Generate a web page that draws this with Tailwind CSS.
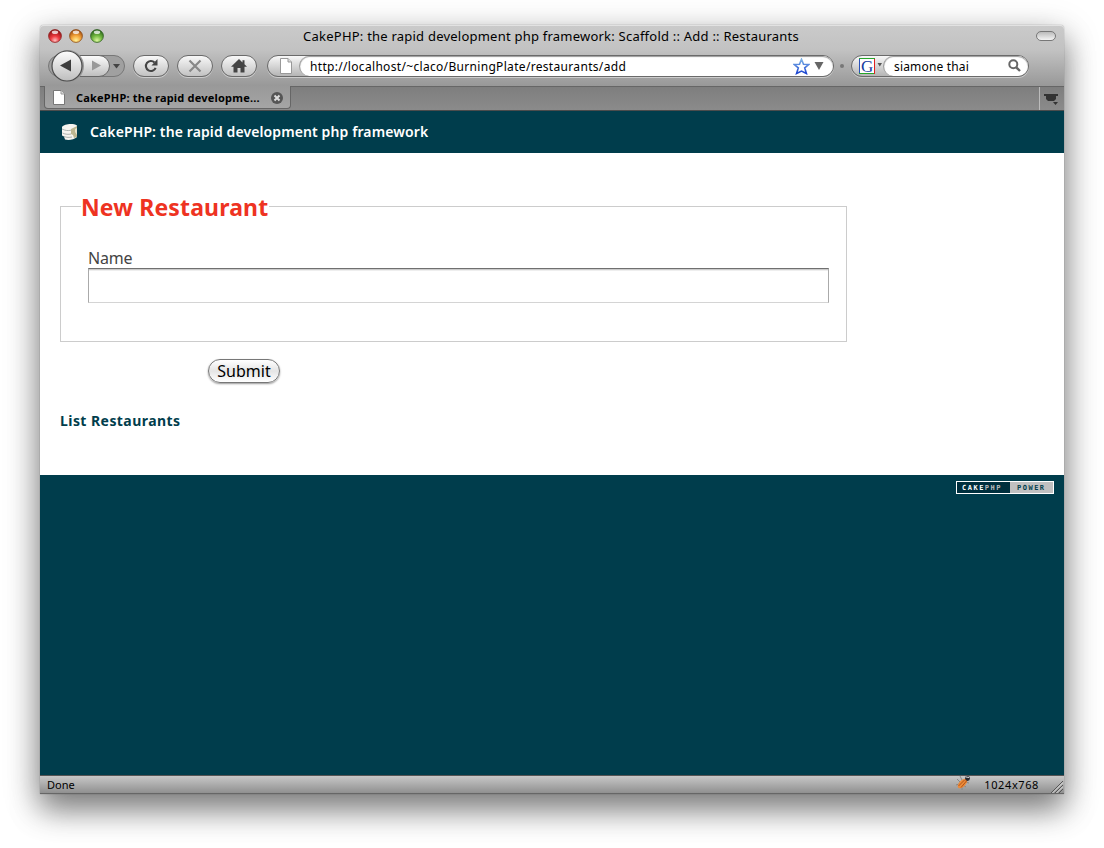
<!DOCTYPE html>
<html lang="en"><head><meta charset="utf-8"><title>CakePHP: the rapid development php framework</title>
<script src="https://cdn.jsdelivr.net/npm/@tailwindcss/browser@4"></script></head>
<body class="bg-white h-[848px] overflow-hidden pt-[25px] pl-[40px] font-['Noto_Sans','Open_Sans',sans-serif] text-black">
<main class="w-[1024px] h-[769px] flex flex-col rounded-t-[4px] shadow-[0_0_1px_rgba(0,0,0,0.6),0_16px_30px_rgba(0,0,0,0.38),0_10px_36px_rgba(0,0,0,0.26)]">
<header class="h-[61px] shrink-0 rounded-t-[4px] border-t border-[#e2e2e2] bg-linear-to-b from-[#cacaca] via-[#c2c2c2] via-40% to-[#989898]">
<div class="h-[20px] flex items-center pl-[8px] pr-[8px]">
<svg class="w-[58px] h-[16px] shrink-0" viewBox="0 0 58 16"><defs>
<radialGradient id="r" cx=".5" cy=".85" r=".85"><stop offset="0" stop-color="#ffc0c0"/><stop offset=".4" stop-color="#ee3b40"/><stop offset="1" stop-color="#7e0c0c"/></radialGradient>
<radialGradient id="y" cx=".5" cy=".85" r=".85"><stop offset="0" stop-color="#fff49a"/><stop offset=".45" stop-color="#f4a53a"/><stop offset="1" stop-color="#95400b"/></radialGradient>
<radialGradient id="g" cx=".5" cy=".85" r=".85"><stop offset="0" stop-color="#dcf8a0"/><stop offset=".45" stop-color="#74b941"/><stop offset="1" stop-color="#215b16"/></radialGradient></defs>
<g stroke-width=".8"><circle cx="7" cy="8" r="6.400" fill="url(#r)" stroke="#8c2020"/><circle cx="28" cy="8" r="6.400" fill="url(#y)" stroke="#8a4b17"/><circle cx="49" cy="8" r="6.400" fill="url(#g)" stroke="#2f5f20"/></g>
<g fill="#fff" opacity=".75"><ellipse cx="7" cy="4.200" rx="3.200" ry="1.800"/><ellipse cx="28" cy="4.200" rx="3.200" ry="1.800"/><ellipse cx="49" cy="4.200" rx="3.200" ry="1.800"/></g></svg>
<h1 class="flex-1 flex justify-center pr-[2px] text-[13px] leading-[20px]"><span class="whitespace-nowrap tracking-[0.224px]">CakePHP: the rapid development php framework: Scaffold :: Add :: Restaurants</span></h1>
<div class="ml-[38px] w-[20px] h-[10px] rounded-full border-[1.5px] border-[#777] bg-linear-to-b from-[#bbb] to-[#f4f4f4]"></div>
</div>
<nav class="h-[40px] flex items-center pl-[8px]">
<svg class="w-[80px] h-[34px] shrink-0" viewBox="0 0 80 34"><defs><linearGradient id="b" x1="0" y1="0" x2="0" y2="1"><stop stop-color="#fdfdfd"/><stop offset="1" stop-color="#bdbdbd"/></linearGradient></defs>
<rect x=".5" y="6.500" width="76" height="21" rx="10.500" fill="#a0a0a0" stroke="#777"/><path d="M20 6.500H51a10.500 10.500 0 0 1 0 21H20z" fill="url(#b)" stroke="#666"/><circle cx="20" cy="17" r="16" fill="#999"/><circle cx="19" cy="17" r="15" fill="url(#b)" stroke="#4c4c4c" stroke-width="1.200"/><path d="M12 16.500l11-6v12z" fill="#3d3d3d"/><path d="M44 11.500l9 5-9 5z" fill="#999"/><path d="M65 15h7l-3.500 4.500z" fill="#444"/></svg>
<div class="ml-[5px] w-[36px] h-[22px] flex items-center justify-center rounded-full border border-[#6a6a6a] bg-linear-to-b from-[#f8f8f8] to-[#c2c2c2] shadow-[0_1px_0_#ccc]"><svg class="w-[16px] h-[16px]" viewBox="0 0 16 16"><path d="M12.600 9.800A5 5 0 1 1 11.500 4.500" fill="none" stroke="#444" stroke-width="2.100"/><path d="M14.500 1v6.500H8.500z" fill="#444"/></svg></div>
<div class="ml-[8px] w-[36px] h-[22px] flex items-center justify-center rounded-full border border-[#6a6a6a] bg-linear-to-b from-[#f8f8f8] to-[#c2c2c2] shadow-[0_1px_0_#ccc]"><svg class="w-[14px] h-[14px]" viewBox="0 0 14 14"><path d="M1.500 1.500l11 11m0-11l-11 11" stroke="#888" stroke-width="2.200"/></svg></div>
<div class="ml-[8px] w-[36px] h-[22px] flex items-center justify-center rounded-full border border-[#6a6a6a] bg-linear-to-b from-[#f8f8f8] to-[#c2c2c2] shadow-[0_1px_0_#ccc]"><svg class="w-[16px] h-[14px]" viewBox="0 0 16 14"><path d="M8 0L0 7.800h2.500V13.500h4V9h3v4.500h4V7.800H16L13.500 5.300V1.200h-2v2.200z" fill="#444"/></svg></div>
<div class="ml-[10px] w-[567px] h-[22px] flex rounded-full border border-[#6a6a6a] bg-linear-to-b from-[#f8f8f8] to-[#b5b5b5] shadow-[0_1px_0_#ccc]">
<svg class="ml-[12px] mt-[2px] w-[12px] h-[16px]" viewBox="0 0 12 16"><path d="M.5.500H8l3.500 3.500v11.500H.5z" fill="#fff" stroke="#999"/><path d="M8 .5V4h3.500" fill="#ddd" stroke="#999"/></svg>
<div class="ml-[7px] flex-1 rounded-full bg-white border-l border-[#999] shadow-[inset_0_1px_1px_#999] flex items-center pl-[10px] text-[12px]"><span class="whitespace-nowrap pt-[2px] tracking-[0.32px]">http://localhost/~claco/BurningPlate/restaurants/add</span>
<svg class="ml-auto w-[17px] h-[17px]" viewBox="0 0 17 17"><defs><linearGradient id="s" x1="0" y1="0" x2="0" y2="1"><stop stop-color="#7fb4e6"/><stop offset="1" stop-color="#1a43d0"/></linearGradient></defs><path d="M8.500 1.200l2 5 5.300.3-4.100 3.300 1.700 5.600-4.900-2.300-4.900 2.300 1.700-5.600L1.200 6.500l5.300-.3z" fill="#fff" stroke="url(#s)" stroke-width="1.600"/></svg><svg class="ml-[4px] mr-[9px] w-[10px] h-[8px]" viewBox="0 0 10 8"><path d="M.5 0h9L5 8z" fill="#666"/></svg></div></div>
<i class="ml-[6px] size-[4px] rounded-full bg-[#777]"></i>
<div class="ml-[7px] w-[178px] h-[22px] flex rounded-full border border-[#6a6a6a] bg-linear-to-b from-[#f8f8f8] to-[#b5b5b5] shadow-[0_1px_0_#ccc]">
<svg class="ml-[7px] mt-[2px] w-[23px] h-[16px] shrink-0 overflow-visible" viewBox="0 0 23 16"><path fill="#fff" d="M0 0h16v16H0z"/><path d="M.5 16V.5" stroke="#2850b8"/><path d="M0 .5h16M0 15.500h16" stroke="#27a52a"/><path d="M15.500 1v15" stroke="#e02020"/><text x="2" y="13.500" font-family="Liberation Serif" font-size="17" fill="#173ca0">G</text><path d="M18.500 5h4.500l-2.200 3.500z" fill="#555"/></svg>
<div class="ml-px flex-1 rounded-full bg-white border-l border-[#999] shadow-[inset_0_1px_1px_#999] flex items-center pl-[10px] text-[12px]"><span class="whitespace-nowrap pt-[2px] tracking-[0.17px]">siamone thai</span><svg class="ml-auto mr-[7px] mb-[2px] w-[13px] h-[13px]" viewBox="0 0 13 13"><circle cx="5.300" cy="5.300" r="4" fill="none" stroke="#666" stroke-width="2"/><path d="M8.300 8.300l3.700 3.700" stroke="#666" stroke-width="2.400"/></svg></div></div>
</nav></header>
<div class="h-[25px] shrink-0 flex items-start bg-linear-to-b from-[#7e7e7e] to-[#8b8b8b] border-t border-b border-t-[#666] border-b-[#4c4c4c]">
<div class="-mt-px ml-[4px] w-[247px] h-[23px] flex items-center rounded-b-[4px] bg-linear-to-b from-[#999] to-[#a5a5a5] border border-t-0 border-[#666]">
<svg class="ml-[8px] w-[12px] h-[15px]" viewBox="0 0 12 15"><path d="M.5.500H8l3.500 3.500v10.500H.5z" fill="#fff" stroke="#777"/><path d="M8 .5V4h3.500" fill="#ddd" stroke="#999"/></svg>
<span class="ml-[11px] pt-[2px] whitespace-nowrap text-[11px] font-bold tracking-[0.2px]">CakePHP: the rapid developme...</span>
<svg class="ml-auto mr-[7px] mt-px w-[12px] h-[12px]" viewBox="0 0 12 12"><circle cx="6" cy="6" r="6" fill="#555"/><path d="M3.500 3.500l5 5m0-5l-5 5" stroke="#ddd" stroke-width="2"/></svg></div>
<div class="ml-auto w-[25px] h-[23px] border-l border-[#bbb] flex items-center justify-center pr-[2px]"><svg class="w-[15px] h-[12px]" viewBox="0 0 15 12"><path d="M0 1h14v2h-2v3l-2 2H4L2 6V3H0zM9 9h5l-2.500 3z" fill="#333"/></svg></div></div>
<div class="h-[42px] shrink-0 bg-[#003d4c] flex items-center pl-[21px] text-white">
<svg class="w-[18px] h-[18px]" viewBox="0 0 18 18"><path d="M1 4c2-3 11-4 15-1.500V14c-3 3-9 3.500-12 2.500l-1-3-2-1z" fill="#f6f5f0"/><path d="M10 6l6-3v11l-3 1-1-3-2-1z" fill="#bdb791"/><path d="M14 6l2-1v7l-2-3z" fill="#e8e3cb"/><path d="M1 6c3 1.500 6 2 9 1.200M1.500 10c3 1.500 6 1.500 8.500 1M3 13.500c3 1.200 5 1 8 .5" fill="none" stroke="#a3aaa6" stroke-width=".9"/></svg>
<span class="ml-[11px] pb-px whitespace-nowrap text-[14px] font-semibold tracking-[0.11px]">CakePHP: the rapid development php framework</span></div>
<section class="h-[322px] shrink-0 bg-white px-[20px] pt-[40px] flex flex-col items-start">
<fieldset class="w-[787px] h-[149px] border border-[#ccc] pl-[20px]"><legend class="pr-[1px] h-[27px] leading-[28px] text-[23px] font-bold text-[#ee3322]"><span class="whitespace-nowrap tracking-[0.15px]">New Restaurant</span></legend>
<label class="block mt-[27px] ml-[7px] h-[21px] leading-[22px] text-[16px] text-[#444]"><span class="tracking-[-0.2px]">Name</span></label>
<input aria-label="Name" class="block ml-[7px] w-[741px] h-[35px] border border-t-[#707070] border-x-[#aaa] border-b-[#d4d4d4] shadow-[inset_0_1px_0_#ccc,inset_0_2px_0_#eee]"></fieldset>
<button class="mt-[17px] ml-[148px] w-[72px] h-[24px] rounded-full border-[1.5px] border-[#777] bg-linear-to-b from-[#fff] via-[#e5e5e5] to-[#fff] shadow-[0_1px_2px_#999] text-[16px] leading-[20px]">Submit</button>
<a class="mt-[28px] leading-[20px] text-[14px] font-bold text-[#003d4c] tracking-[0.44px]">List Restaurants</a></section>
<footer class="flex-1 bg-[#003d4c] flex justify-end items-start pt-[6px] pr-[10px]">
<div class="w-[98px] h-[13px] border border-white flex text-[7px] leading-[12px] font-bold font-['DejaVu_Sans_Mono',monospace] tracking-[1.5px]"><span class="w-[53px] pl-[5px] bg-[#002f3d] text-white">CAKE<span class="text-[#bbb]">PHP</span></span><span class="flex-1 pl-[7px] bg-[#c0c0c0] text-[#003d4c]">POWER</span></div></footer>
<div class="h-[19px] shrink-0 flex items-center pl-[7px] border-t border-b border-t-[#555] border-b-[#666] bg-linear-to-b from-[#c8c8c8] to-[#909090] text-[11px] leading-[16px]"><span>Done</span>
<svg class="ml-auto w-[17px] h-[16px] -mt-[3px]" viewBox="0 0 17 16"><path d="M2 4l3 3M5 1l2 4M11 12l-3-2M14 8l-4-1M1 10l3-1M7 15l0-3" stroke="#888"/><ellipse cx="7.500" cy="8.500" rx="6" ry="3.200" transform="rotate(-45 7.500 8.500)" fill="#ee8a38"/><path d="M3.500 11l6-6M6 12.500l5.500-6.500" stroke="#a34f18" stroke-width=".9"/><circle cx="12.500" cy="3.500" r="2.400" fill="#2a2a30"/><path d="M11 2l3 .5" stroke="#ddd"/></svg>
<span class="ml-[12px] tracking-[0.6px]">1024x768</span><svg class="ml-[12px] mr-[1px] w-[12px] h-[12px] self-end" viewBox="0 0 12 12"><path d="M0 12L12 0M4 12l8-8M8 12l4-4" stroke="#555"/><path d="M1.500 12L12 1.500M5.500 12l6.500-6.500" stroke="#ddd"/></svg></div>
</main>
</body></html>
